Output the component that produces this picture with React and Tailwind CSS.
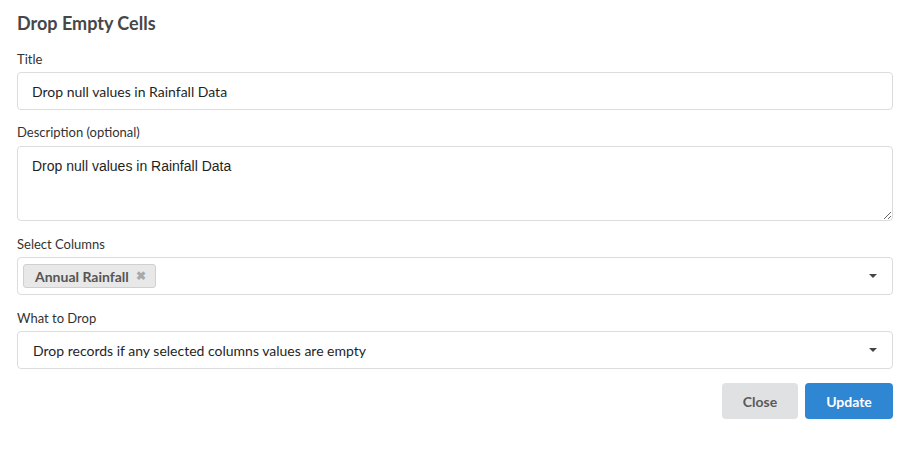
import React from "react";

function Caret() {
  return (
    <svg width="8" height="4" viewBox="0 0 8 4" className="shrink-0 mr-[1px]">
      <path d="M0 0 L8 0 L4 4 Z" fill="#444" />
    </svg>
  );
}

export default function App() {
  const lato = { fontFamily: "Lato, 'Liberation Sans', sans-serif" };
  return (
    <div className="w-[906px] h-[453px] bg-white pl-[17px] pr-[13px] pt-[11px]" style={lato}>
      <div className="text-[18px] leading-[24px] font-bold text-[#474747]">Drop Empty Cells</div>

      <div className="mt-[15px] text-[13px] leading-[18px] text-[#333]">Title</div>
      <div className="mt-[4px] h-[38px] border border-[#dcdcdc] rounded-[4px] flex items-center px-[14px] text-[14px] text-[#1f1f1f]">
        Drop null values in Rainfall Data
      </div>

      <div className="mt-[13px] text-[13px] leading-[18px] text-[#333]">Description (optional)</div>
      <textarea
        className="mt-[5px] block w-full h-[75px] border border-[#dcdcdc] rounded-[4px] px-[14px] pt-[10px] text-[14px] leading-[18px] text-[#1f1f1f] resize-y outline-none"
        style={{ fontFamily: "'Liberation Sans', Arial, sans-serif" }}
        defaultValue="Drop null values in Rainfall Data"
      />

      <div className="mt-[14px] text-[13px] leading-[18px] text-[#333]">Select Columns</div>
      <div className="mt-[4px] h-[38px] border border-[#dcdcdc] rounded-[4px] flex items-center pl-[5px] pr-[14px]">
        <div className="h-[24px] flex items-center gap-[7px] bg-[#e8e8e8] border border-[#d0d0d0] rounded-[3px] pl-[11px] pr-[9px] text-[14px] font-bold text-[#555]">
          <span>Annual Rainfall</span>
          <span className="text-[#a8a8a8] text-[12px] leading-none">✖</span>
        </div>
        <div className="flex-1" />
        <Caret />
      </div>

      <div className="mt-[14px] text-[13px] leading-[18px] text-[#333]">What to Drop</div>
      <div className="mt-[4px] h-[38px] border border-[#dcdcdc] rounded-[4px] flex items-center pl-[15px] pr-[14px] text-[14px] text-[#1f1f1f]">
        <span className="flex-1">Drop records if any selected columns values are empty</span>
        <Caret />
      </div>

      <div className="mt-[14px] flex justify-end gap-[7px]">
        <button className="w-[76px] h-[36px] rounded-[4px] bg-[#e0e1e2] text-[#5a5a5a] text-[14px] font-bold" style={lato}>Close</button>
        <button className="w-[88px] h-[36px] rounded-[4px] bg-[#2f86d3] text-white text-[14px] font-bold" style={lato}>Update</button>
      </div>
    </div>
  );
}
